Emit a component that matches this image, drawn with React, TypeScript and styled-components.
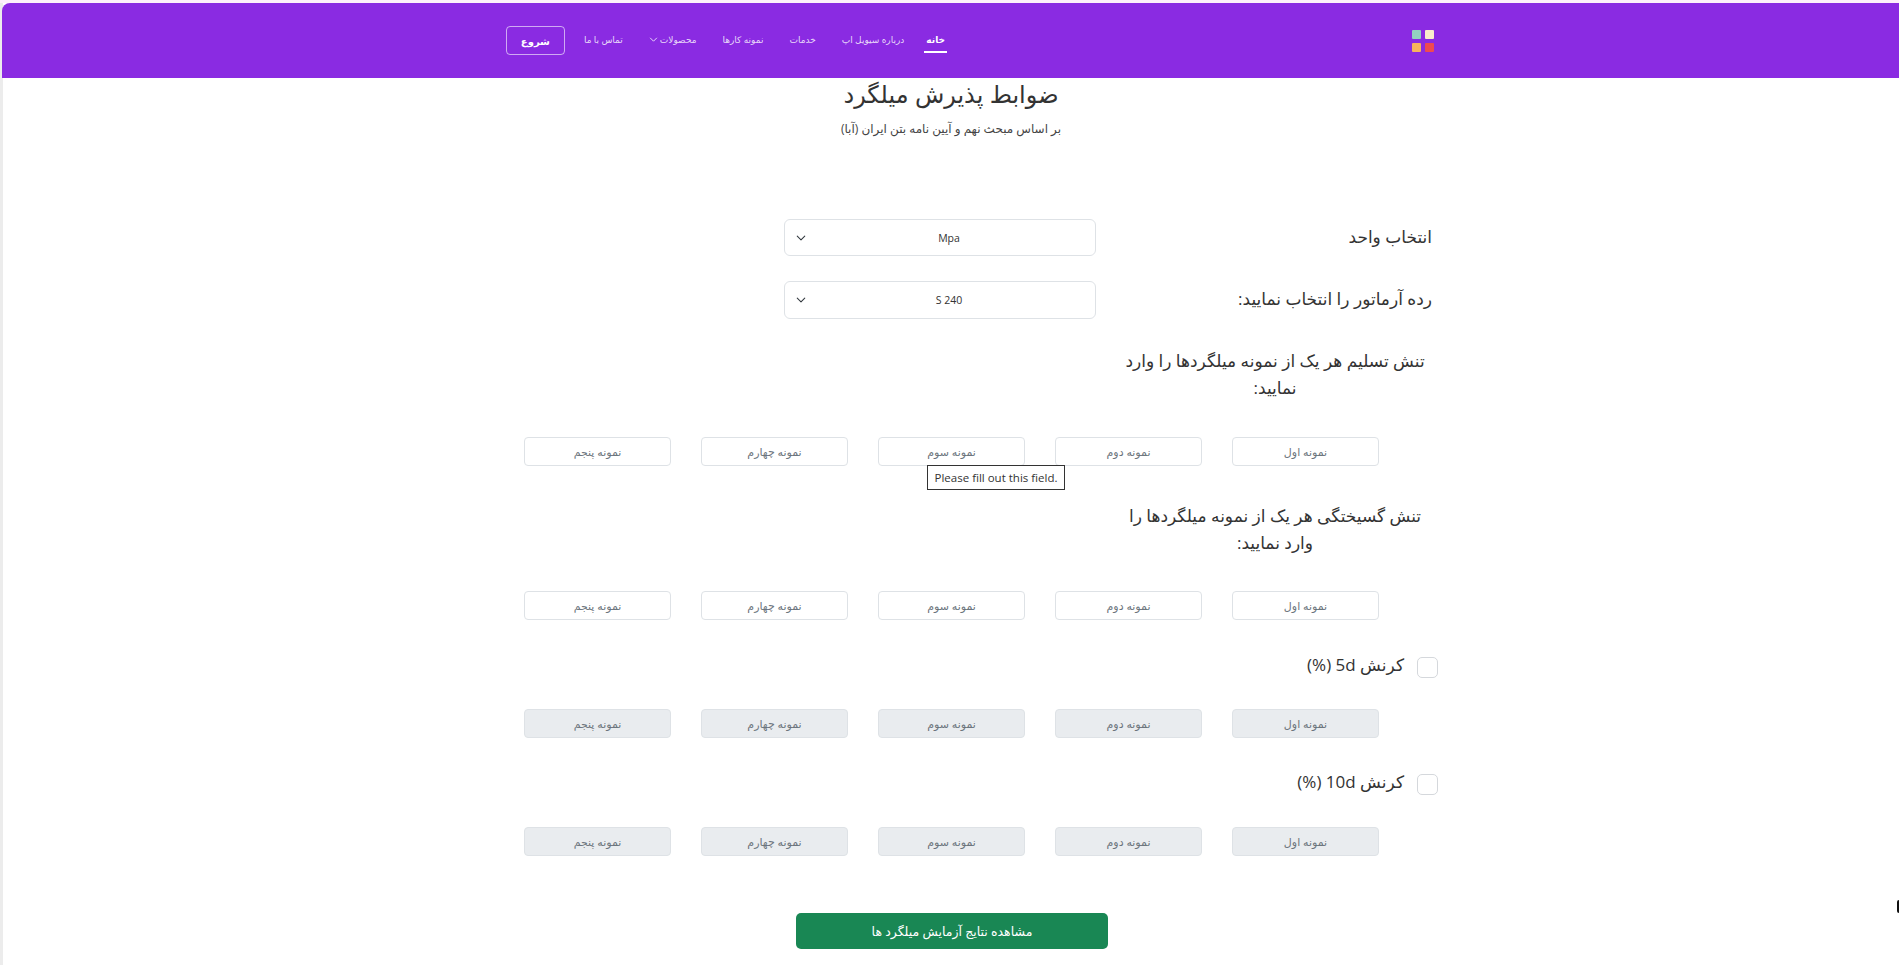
import React from "react";
import styled, { createGlobalStyle } from "styled-components";

const FONT = `"Open Sans", "Noto Sans", "DejaVu Sans", sans-serif`;

const GlobalStyle = createGlobalStyle`
  html, body {
    margin: 0;
    height: 965px;
    overflow: hidden;
    background: #fff;
    font-family: ${FONT};
  }
  * { box-sizing: border-box; }
`;

const Page = styled.div`
  height: 965px;
  padding-top: 3px;
  background: #fdf0fb;
`;

const Frame = styled.div`
  height: 962px;
  border-left: 3px solid #ececec;
  background: #fff;
  direction: rtl;
`;

const Header = styled.header`
  height: 75px;
  background: #8a2be2;
  border-top-left-radius: 8px;
  margin-left: -1px;
  padding: 0 465px 0 504px;
  display: flex;
  align-items: center;
`;

const Logo = styled.div`
  width: 22px;
  display: grid;
  grid-template-columns: 9px 9px;
  gap: 4px;
  margin-left: 465px;
`;

const LogoDot = styled.span<{ $color: string }>`
  width: 9px;
  height: 9px;
  border-radius: 1px;
  background: ${(p) => p.$color};
`;

const Nav = styled.nav`
  flex: 1;
  display: flex;
  align-items: center;
  gap: 22px;
  height: 100%;
`;

const NavLink = styled.a<{ $active?: boolean }>`
  display: flex;
  align-items: center;
  gap: 2px;
  height: ${(p) => (p.$active ? "25px" : "29px")};
  padding: 0 2px;
  margin-left: ${(p) => (p.$active ? "-4px" : "0")};
  color: ${(p) => (p.$active ? "#fff" : "rgba(255,255,255,0.82)")};
  font-size: 9px;
  font-weight: ${(p) => (p.$active ? 700 : 400)};
  white-space: nowrap;
  border-bottom: 2px solid ${(p) => (p.$active ? "#fff" : "transparent")};
`;

const StartButton = styled.a`
  flex: none;
  width: 59px;
  height: 29px;
  margin-right: -5px;
  display: flex;
  align-items: center;
  justify-content: center;
  color: #fff;
  font-size: 10px;
  font-weight: 700;
  border: 1px solid rgba(255, 255, 255, 0.6);
  border-radius: 4px;
`;

const Intro = styled.div`
  text-align: center;
  color: #333;
`;

const Title = styled.h1`
  margin: -2px 0 0;
  padding-top: 1px;
  font-size: 24px;
  font-weight: 400;
  line-height: 34px;
`;

const Subtitle = styled.p`
  margin: 9px 0 0;
  font-size: 12px;
  line-height: 17px;
  color: #444;
`;

const Form = styled.form`
  width: 929px;
  margin: 82px 467px 0 auto;
  direction: rtl;
`;

const Row = styled.div<{ $mb: number }>`
  display: flex;
  align-items: center;
  margin-bottom: ${(p) => p.$mb}px;
`;

const RowLabel = styled.label`
  width: 336px;
  margin-top: -3px;
  font-size: 17px;
  color: #333;
  white-space: nowrap;
`;

const Select = styled.div<{ $h: number }>`
  width: 312px;
  height: ${(p) => p.$h}px;
  display: grid;
  grid-template-columns: 18px 1fr;
  align-items: center;
  text-align: center;
  border: 1px solid #dee2e6;
  border-radius: 6px;
  font-size: 10.5px;
  color: #333;
  background: #fff;
  direction: ltr;
`;

const Chevron = styled.svg`
  width: 10px;
  height: 10px;
  margin-left: 11px;
`;

const SectionLabel = styled.div<{ $mt: number; $mb: number }>`
  width: 314px;
  margin-top: ${(p) => p.$mt}px;
  margin-bottom: ${(p) => p.$mb}px;
  text-align: center;
  font-size: 17px;
  line-height: 27px;
  color: #333;
`;

const InputRow = styled.div<{ $mb: number }>`
  display: flex;
  gap: 30px;
  padding-right: 53px;
  margin-bottom: ${(p) => p.$mb}px;
`;

const Field = styled.div`
  position: relative;
  width: 147px;
`;

const SampleInput = styled.input`
  display: block;
  width: 100%;
  height: 29px;
  padding: 0 6px;
  border: 1px solid #dee2e6;
  border-radius: 4px;
  background: #fff;
  text-align: center;
  font-family: ${FONT};
  font-size: 11px;
  direction: rtl;
  &::placeholder { color: #6c757d; opacity: 1; }
  &:disabled { background: #e9ecef; }
`;

const Tooltip = styled.div`
  position: absolute;
  top: 28px;
  left: 49px;
  width: 138px;
  height: 25px;
  display: flex;
  align-items: center;
  justify-content: center;
  background: #fff;
  border: 1px solid #333;
  color: #333;
  font-size: 11.5px;
  direction: ltr;
  white-space: nowrap;
  z-index: 2;
`;

const CheckRow = styled.div<{ $mb: number }>`
  height: 29px;
  display: flex;
  align-items: center;
  gap: 13px;
  margin-bottom: ${(p) => p.$mb}px;
  margin-right: -6px;
`;

const CheckBox = styled.input`
  appearance: none;
  width: 21px;
  height: 21px;
  margin: 4px 0 0;
  border: 1px solid #d5d8dc;
  border-radius: 5px;
  background: #fff;
`;

const CheckLabel = styled.label`
  font-size: 17px;
  color: #333;
  margin-top: -3px;
`;

const Submit = styled.button`
  display: block;
  width: 312px;
  height: 36px;
  margin-right: 324px;
  border: 0;
  border-radius: 5px;
  background: #198754;
  color: #fff;
  font-family: ${FONT};
  font-size: 12.5px;
`;

const EdgeSliver = styled.div`
  position: fixed;
  right: 0;
  top: 900px;
  width: 2px;
  height: 13px;
  background: #111;
  border-radius: 2px 0 0 2px;
`;

const samples = ["نمونه اول", "نمونه دوم", "نمونه سوم", "نمونه چهارم", "نمونه پنجم"];

const SampleRow = ({ disabled, tooltip, mb }: { disabled?: boolean; tooltip?: boolean; mb: number }) => (
  <InputRow $mb={mb}>
    {samples.map((s, i) => (
      <Field key={s}>
        <SampleInput placeholder={s} disabled={disabled} />
        {tooltip && i === 2 && <Tooltip>Please fill out this field.</Tooltip>}
      </Field>
    ))}
  </InputRow>
);

const ChevronIcon = () => (
  <Chevron viewBox="0 0 16 16" fill="none" stroke="#343a40" strokeWidth="1.7" strokeLinecap="round" strokeLinejoin="round">
    <path d="m2 5 6 6 6-6" />
  </Chevron>
);

const App = () => (
  <Page>
    <GlobalStyle />
    <Frame>
      <Header>
        <Logo>
          <LogoDot $color="#f9eccb" />
          <LogoDot $color="#93d2c0" />
          <LogoDot $color="#ef4a50" />
          <LogoDot $color="#f8b35c" />
        </Logo>
        <Nav>
          <NavLink $active>خانه</NavLink>
          <NavLink>درباره سیویل اپ</NavLink>
          <NavLink>خدمات</NavLink>
          <NavLink>نمونه کارها</NavLink>
          <NavLink>
            محصولات
            <svg width="9" height="9" viewBox="0 0 16 16" fill="none" stroke="#fff" strokeWidth="1.4">
              <path d="m2 5 6 6 6-6" />
            </svg>
          </NavLink>
          <NavLink>تماس با ما</NavLink>
          <StartButton>شروع</StartButton>
        </Nav>
      </Header>
      <Intro>
        <Title>ضوابط پذیرش میلگرد</Title>
        <Subtitle>بر اساس مبحث نهم و آیین نامه بتن ایران (آبا)</Subtitle>
      </Intro>
      <Form>
        <Row $mb={25}>
          <RowLabel>انتخاب واحد</RowLabel>
          <Select $h={37}>
            <ChevronIcon />
            <span>Mpa</span>
          </Select>
        </Row>
        <Row $mb={0}>
          <RowLabel>رده آرماتور را انتخاب نمایید:</RowLabel>
          <Select $h={38}>
            <ChevronIcon />
            <span>S 240</span>
          </Select>
        </Row>
        <SectionLabel $mt={28} $mb={36}>
          تنش تسلیم هر یک از نمونه میلگردها را وارد نمایید:
        </SectionLabel>
        <SampleRow tooltip mb={36} />
        <SectionLabel $mt={0} $mb={35}>
          تنش گسیختگی هر یک از نمونه میلگردها را وارد نمایید:
        </SectionLabel>
        <SampleRow mb={31} />
        <CheckRow $mb={29}>
          <CheckBox type="checkbox" />
          <CheckLabel>کرنش 5d (%)</CheckLabel>
        </CheckRow>
        <SampleRow disabled mb={30} />
        <CheckRow $mb={30}>
          <CheckBox type="checkbox" />
          <CheckLabel>کرنش 10d (%)</CheckLabel>
        </CheckRow>
        <SampleRow disabled mb={57} />
        <Submit type="button">مشاهده نتایج آزمایش میلگرد ها</Submit>
      </Form>
    </Frame>
    <EdgeSliver />
  </Page>
);

export default App;
